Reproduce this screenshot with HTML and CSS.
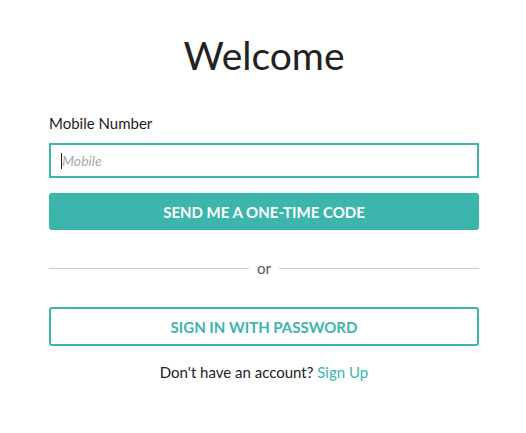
FILE: index.html
```html
<!DOCTYPE html>
<html>
<head>
<meta charset="utf-8">
<link rel="stylesheet" href="styles.css">
</head>
<body>
<div class="page">
  <h1 class="title">Welcome</h1>
  <label class="label" for="mobile">Mobile Number</label>
  <div class="field">
    <input class="input" id="mobile" type="text" placeholder="Mobile">
    <span class="caret"></span>
  </div>
  <button class="btn-primary">SEND ME A ONE-TIME CODE</button>
  <div class="divider"><span class="line"></span><span class="or">or</span><span class="line"></span></div>
  <button class="btn-outline">SIGN IN WITH PASSWORD</button>
  <p class="footer">Don't have an account? <a class="link" href="#">Sign Up</a></p>
</div>
</body>
</html>
```
FILE: styles.css
```css
html, body {
  margin: 0;
  padding: 0;
  background: #fff;
}
body {
  font-family: Lato, "Open Sans", sans-serif;
  color: #222;
}
.page {
  width: 430px;
  margin-left: 49px;
  display: flex;
  flex-direction: column;
}
.title {
  margin: 30px 0 0;
  font-size: 39px;
  font-weight: 400;
  line-height: 50px;
  text-align: center;
  color: #222;
}
.label {
  margin-top: 34px;
  font-size: 15px;
  line-height: 18px;
  color: #222;
}
.field {
  position: relative;
  margin-top: 11px;
}
.input {
  display: block;
  box-sizing: border-box;
  height: 35px;
  width: 100%;
  border: 2px solid #3cb5ac;
  border-radius: 0;
  padding: 0 11px;
  font-family: Lato, sans-serif;
  font-size: 14px;
  outline: none;
  color: #222;
}
.input::placeholder {
  color: #a9a9a9;
  font-style: italic;
}
.caret {
  position: absolute;
  left: 12px;
  top: 10px;
  width: 1px;
  height: 16px;
  background: #222;
}
.btn-primary {
  margin-top: 15px;
  height: 37px;
  border: none;
  border-radius: 3px;
  background: #3cb5ac;
  color: #fff;
  font-family: Lato, sans-serif;
  font-weight: 700;
  font-size: 15px;
  padding: 0;
}
.divider {
  margin-top: 30px;
  display: flex;
  align-items: center;
  gap: 8px;
  height: 16px;
}
.line {
  flex: 1;
  height: 1px;
  background: #c8c8c8;
}
.or {
  font-size: 15px;
  line-height: 16px;
  color: #555;
}
.btn-outline {
  margin-top: 31px;
  height: 39px;
  box-sizing: border-box;
  border: 2px solid #3cb5ac;
  border-radius: 3px;
  background: #fff;
  color: #3cb5ac;
  font-family: Lato, sans-serif;
  font-weight: 700;
  font-size: 15px;
  padding: 0;
}
.footer {
  margin: 17px 0 0;
  text-align: center;
  font-size: 15px;
  line-height: 18px;
  color: #222;
}
.link {
  color: #3cb5ac;
  text-decoration: none;
}
```
